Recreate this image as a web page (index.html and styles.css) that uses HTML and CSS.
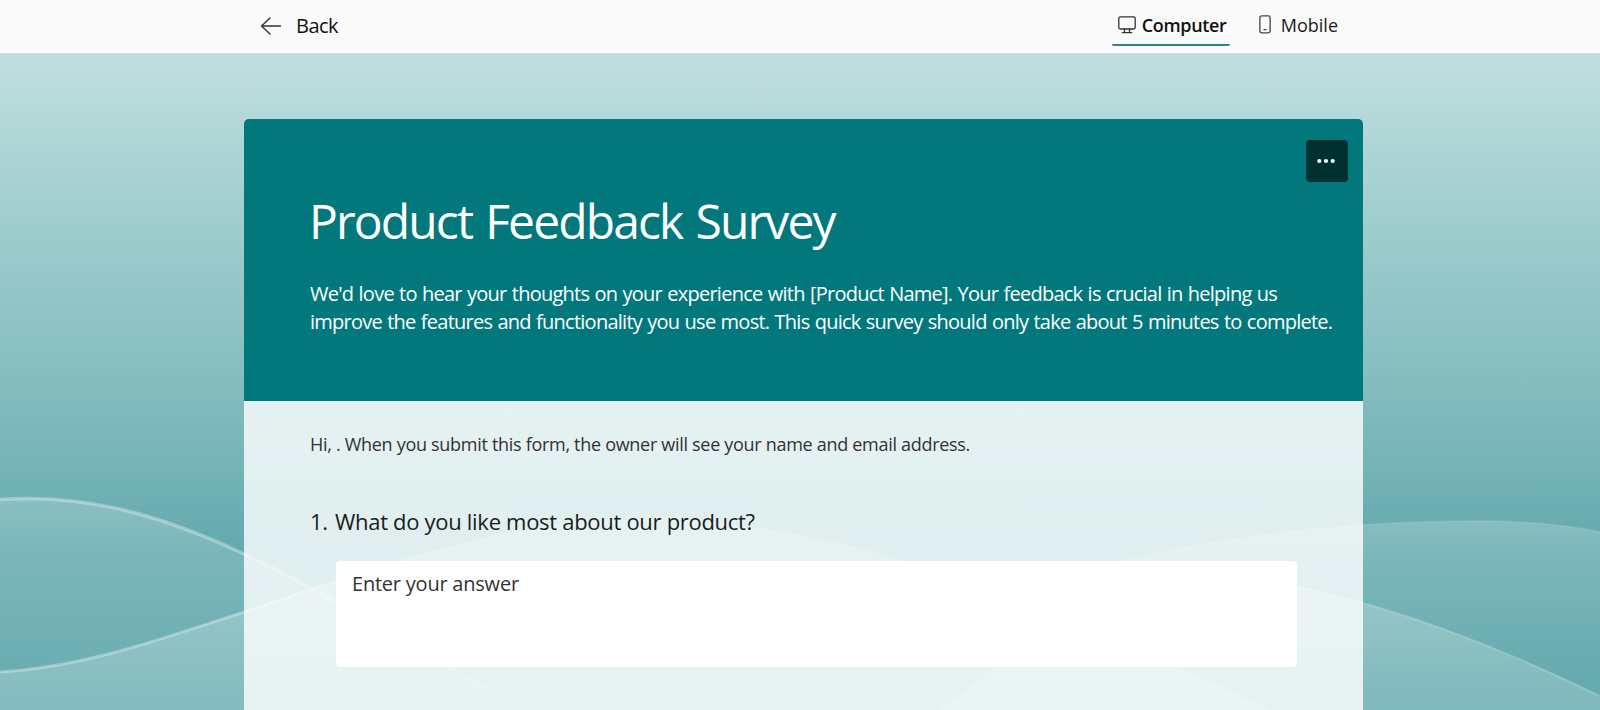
FILE: index.html
```html
<!DOCTYPE html>
<html lang="en">
<head>
    <meta charset="UTF-8">
    <meta name="viewport" content="width=device-width, initial-scale=1.0">
    <title>Product Feedback Survey</title>
    <link rel="stylesheet" href="styles.css">
</head>
<body>

    <!-- Preview bar -->
    <div class="topbar">
        <a class="back">
            <svg width="22" height="18" viewBox="0 0 22 18" fill="none" stroke="#333" stroke-width="1.4" stroke-linecap="round" stroke-linejoin="round">
                <path d="M20.5 9H1.5M10 1L1.5 9L10 17"/>
            </svg>
            <span>Back</span>
        </a>
        <div class="tabs">
            <a class="tab active">
                <svg width="18" height="18" viewBox="0 0 18 18" fill="none" stroke="#333" stroke-width="1.3" stroke-linecap="round">
                    <rect x="0.8" y="0.8" width="16.4" height="12.2" rx="1.5"/>
                    <path d="M6.5 13v3.5M11.5 13v3.5M4.3 16.6h9.4"/>
                </svg>
                <span>Computer</span>
            </a>
            <a class="tab">
                <svg width="12" height="19" viewBox="0 0 12 19" fill="none" stroke="#444" stroke-width="1.3" stroke-linecap="round">
                    <rect x="0.9" y="0.9" width="10.2" height="17" rx="1.8"/>
                    <path d="M5 14.7h2"/>
                </svg>
                <span>Mobile</span>
            </a>
        </div>
    </div>

    <div class="page">
        <!-- Background waves -->
        <svg class="waves" viewBox="0 53 1600 657" preserveAspectRatio="none">
            <defs>
                <linearGradient id="fadeA" gradientUnits="userSpaceOnUse" x1="0" y1="498" x2="0" y2="690">
                    <stop offset="0" stop-color="#fff" stop-opacity="0.2"/>
                    <stop offset="1" stop-color="#fff" stop-opacity="0.04"/>
                </linearGradient>
                <linearGradient id="fadeB" gradientUnits="userSpaceOnUse" x1="0" y1="520" x2="0" y2="740">
                    <stop offset="0" stop-color="#fff" stop-opacity="0.16"/>
                    <stop offset="0.4" stop-color="#fff" stop-opacity="0.24"/>
                    <stop offset="1" stop-color="#fff" stop-opacity="0.17"/>
                </linearGradient>
                <linearGradient id="fadeC" gradientUnits="userSpaceOnUse" x1="0" y1="521" x2="0" y2="690">
                    <stop offset="0" stop-color="#fff" stop-opacity="0.2"/>
                    <stop offset="1" stop-color="#fff" stop-opacity="0.01"/>
                </linearGradient>
                <linearGradient id="line" gradientUnits="userSpaceOnUse" x1="0" y1="0" x2="1600" y2="0">
                    <stop offset="0.15" stop-color="#fff" stop-opacity="0.33"/>
                    <stop offset="0.25" stop-color="#fff" stop-opacity="0.15"/>
                    <stop offset="0.4" stop-color="#fff" stop-opacity="0.08"/>
                    <stop offset="1" stop-color="#fff" stop-opacity="0.05"/>
                </linearGradient>
            </defs>
            <path fill="url(#fadeA)" d="M0 499.500C85 493 164 516 244 554C330 594 440 662 525 710H0Z"/>
            <path fill="url(#fadeB)" d="M0 672C85 667 164 638 244 612C350 577 500 520 640 520C840 520 1010 592 1270 710H0Z"/>
            <path fill="url(#fadeC)" d="M750 710C960 580 1220 521 1480 521Q1545 521 1600 532V710Z"/>
            <path fill="url(#fadeB)" d="M940 710C1020 655 1080 572 1180 572C1270 572 1420 608 1600 696V710Z"/>
            <g fill="none" stroke="url(#line)">
                <path stroke-width="3.500" d="M0 499.500C85 493 164 516 244 554C330 594 440 662 525 710"/>
                <path stroke-width="3" d="M0 672C85 667 164 638 244 612C350 577 500 520 640 520C840 520 1010 592 1270 710"/>
                <path stroke-width="2" stroke="#fff" stroke-opacity="0.1" d="M750 710C960 580 1220 521 1480 521Q1545 521 1600 532"/>
                <path stroke-width="2" stroke="#fff" stroke-opacity="0.2" d="M1180 572C1270 572 1420 608 1600 696"/>
            </g>
        </svg>

        <!-- Form -->
        <div class="form">
            <div class="form-header">
                <button class="more" aria-label="More options">
                    <svg width="18" height="6" viewBox="0 0 18 6" fill="#fff">
                        <circle cx="2.300" cy="3" r="2.100"/>
                        <circle cx="9" cy="3" r="2.100"/>
                        <circle cx="15.700" cy="3" r="2.100"/>
                    </svg>
                </button>
                <h1>Product Feedback Survey</h1>
                <p>We'd love to hear your thoughts on your experience with [Product Name]. Your feedback is crucial in helping us improve the features and functionality you use most. This quick survey should only take about 5 minutes to complete.</p>
            </div>
            <div class="form-body">
                <p class="notice">Hi, . When you submit this form, the owner will see your name and email address.</p>
                <div class="question">
                    <span class="number">1.</span>
                    <span class="question-text">What do you like most about our product?</span>
                </div>
                <textarea class="answer" placeholder="Enter your answer"></textarea>
            </div>
        </div>
    </div>

</body>
</html>
```
FILE: styles.css
```css
* {
    box-sizing: border-box;
}
body {
    margin: 0;
    height: 710px;
    overflow: hidden;
    font-family: "Open Sans", "Noto Sans", sans-serif;
    color: #1c1c1c;
}
.topbar {
    height: 53px;
    padding: 0 262px 0 260px;
    background-color: #fafafa;
    display: flex;
    justify-content: space-between;
}
.back {
    display: flex;
    align-items: center;
    gap: 14px;
    padding-bottom: 1px;
    font-size: 20px;
    line-height: 28px;
    letter-spacing: -0.5px;
    color: #111;
}
.tabs {
    display: flex;
    gap: 29px;
}
.tab {
    display: flex;
    align-items: center;
    height: 46px;
    padding-top: 4px;
    font-size: 18px;
    line-height: 26px;
}
.tab svg {
    margin-right: 10px;
    margin-bottom: 1px;
}
.active {
    width: 118px;
    padding-top: 5px;
    padding-left: 6px;
    border-bottom: 2px solid #2b8288;
    border-radius: 2px;
    font-weight: 600;
    letter-spacing: -0.35px;
    color: #111;
}
.active svg {
    margin-right: 6px;
    margin-bottom: 0;
}
.page {
    position: relative;
    height: 657px;
    padding: 66px 237px 0 244px;
    background: linear-gradient(#c1dfdf 0, #a3cfd0 150px, #82bbbd 345px, #73b3b6 420px, #62a9ad 500px, #62a9ad 657px);
}
.waves {
    position: absolute;
    top: 0;
    left: 0;
    width: 100%;
    height: 100%;
}
.form {
    position: relative;
    height: 591px;
    display: flex;
    flex-direction: column;
    border-radius: 5px 5px 0 0;
    overflow: hidden;
}
.form-header {
    position: relative;
    height: 282px;
    padding: 70px 20px 0 66px;
    background-color: #03787c;
    color: white;
}
.form-header h1 {
    margin: 0 0 27px -1px;
    font-size: 48px;
    line-height: 64px;
    font-weight: 400;
    letter-spacing: -1.88px;
    word-spacing: 2.5px;
}
.form-header p {
    margin: 0;
    font-size: 20px;
    line-height: 28px;
    font-weight: 500;
    letter-spacing: -0.75px;
    word-spacing: 0.8px;
}
.more {
    position: absolute;
    top: 21px;
    right: 15px;
    width: 42px;
    height: 42px;
    padding: 0 2px 0 0;
    border: none;
    border-radius: 4px;
    background-color: #003031;
    display: flex;
    align-items: center;
    justify-content: center;
}
.form-body {
    flex: 1;
    padding: 31px 65px 0 66px;
    background-color: rgba(255, 255, 255, 0.8);
}
.notice {
    margin: 0 0 50px;
    font-size: 18px;
    line-height: 24px;
    letter-spacing: -0.3px;
    color: #333;
}
.question {
    display: flex;
    margin-bottom: 25px;
    font-size: 22px;
    line-height: 30px;
    letter-spacing: -0.3px;
}
.number {
    width: 25px;
}
.answer {
    display: block;
    width: 961px;
    height: 106px;
    margin-left: 26px;
    padding: 9px 16px;
    border: none;
    border-radius: 4px;
    background-color: white;
    font-family: inherit;
    font-size: 20px;
    line-height: 28px;
    letter-spacing: -0.22px;
    resize: none;
}
.answer::placeholder {
    color: #333;
}
```
